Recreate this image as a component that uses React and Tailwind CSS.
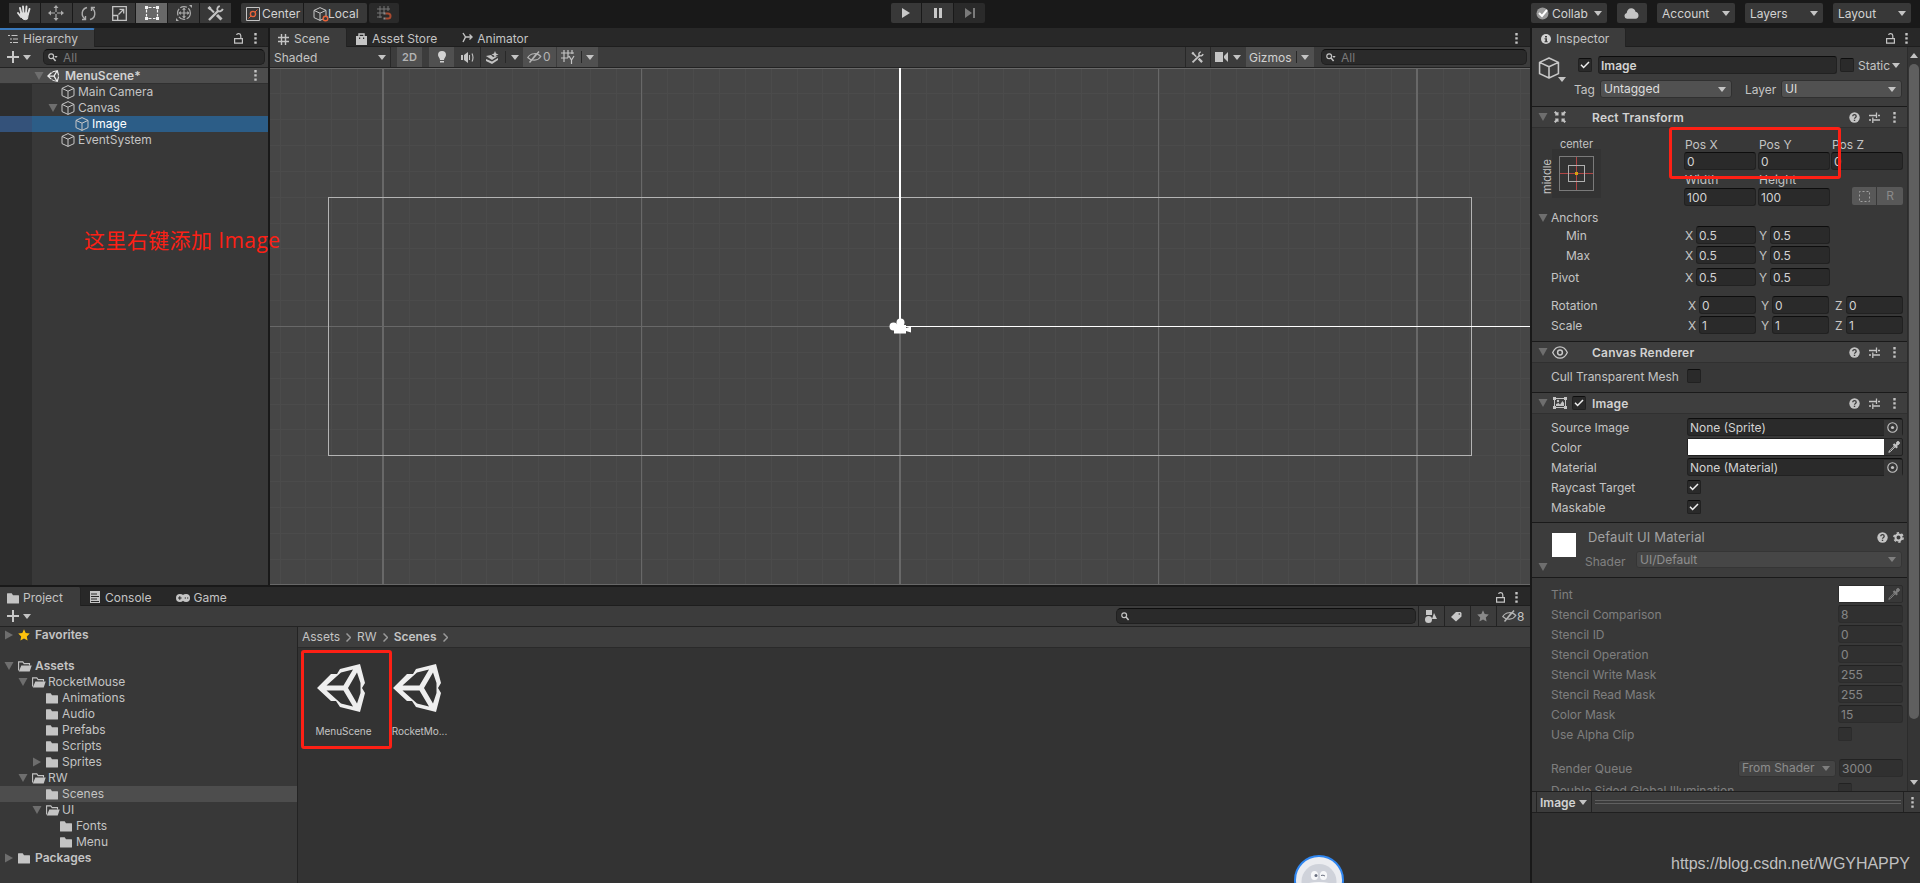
import clsx from "clsx";

/* ---------- icons ---------- */

const Down = ({ className = "text-[#c4c4c4]" }) => (
  <svg width="8" height="5" viewBox="0 0 8 5" className={clsx("shrink-0", className)} fill="currentColor">
    <path d="M0 0h8L4 5z" />
  </svg>
);

const Fold = ({ open = true }) => (
  <svg width="10" height="10" viewBox="0 0 10 10" className="shrink-0 text-[#6e6e6e]" fill="currentColor">
    {open ? <path d="M.5 1h9L5 9z" /> : <path d="M1 .5v9L9 5z" />}
  </svg>
);

const Dots = () => (
  <svg width="3" height="11" viewBox="0 0 3 11" className="shrink-0" fill="#c4c4c4">
    <path d="M.3 0h2.4v2.4H.3zM.3 4.2h2.4v2.4H.3zM.3 8.4h2.4v2.4H.3z" />
  </svg>
);

const Lock = () => (
  <svg width="9" height="11" viewBox="0 0 9 11" className="shrink-0" fill="none" stroke="#c4c4c4" strokeWidth="1.2">
    <path d="M.6 5.6h7.8v4.6H.6zM6.8 5.6V2.8C6.8.1 3 .1 2.6 2" />
  </svg>
);

const Cube = ({ size = 14 }) => (
  <svg width={size} height={size} viewBox="0 0 14 14" className="shrink-0" fill="none" stroke="#c8c8c8" strokeLinejoin="round">
    <path d="M7 .6l6 2.8v7.2l-6 2.8-6-2.8V3.4zM1 3.4l6 2.8 6-2.8M7 6.2v7.2" />
  </svg>
);

const UnityLogo = ({ size = 48, color = "#eeeeee" }) => (
  <svg width={size} height={size} viewBox="0 0 48 48" className="shrink-0">
    <path
      fill={color}
      fillRule="evenodd"
      d="M0 24L14 10h6l3-5L43 0l5 19-3 5 3 5-5 19-20-5-4-6h-5zM9.500 21.500H26.500L36 5.500 24 8.500zM9.500 26.500L24 39.500 36 42.500 26.500 26.500zM31 24L40 39.500 43.500 29V19L40 8.500z"
    />
  </svg>
);

const Folder = () => (
  <svg width="13" height="11" viewBox="0 0 13 11" className="shrink-0" fill="#c4c4c4">
    <path d="M0 .8Q0 .3.5.3h4.200l1.300 1.900h5.500q.5 0 .5.5v7.300q0 .5-.5.5H.5q-.5 0-.5-.5z" />
  </svg>
);

const FolderOpen = () => (
  <svg width="14" height="11" viewBox="0 0 14 11" className="shrink-0">
    <path d="M.6 9.500V.9h4.200l1.300 1.700h5.400v2" fill="none" stroke="#c4c4c4" strokeWidth="1.100" />
    <path d="M3.300 4.500h10.400l-2 6H.8z" fill="#c4c4c4" />
  </svg>
);

const Star = ({ color }) => (
  <svg width="12" height="12" viewBox="0 0 12 12" className="shrink-0" fill={color}>
    <path d="M6 .3l1.700 3.800 4.100.5-3 2.800.8 4.200L6 9.500l-3.600 2.100.8-4.200-3-2.800 4.100-.5z" />
  </svg>
);

const Search = ({ menu }) => (
  <svg width="10" height="9" viewBox="0 0 10 9" className="shrink-0" fill="none" stroke="#c4c4c4">
    <circle cx="3.200" cy="3.200" r="2.400" strokeWidth="1.200" />
    <path d="M5 5l2.600 3" strokeWidth="1.500" />
    {menu && <path d="M6.300 3h3.400L8 5z" fill="#c4c4c4" stroke="none" />}
  </svg>
);

const Plus = () => (
  <svg width="12" height="12" viewBox="0 0 12 12" className="shrink-0" stroke="#c8c8c8" strokeWidth="2">
    <path d="M6 0v12M0 6h12" />
  </svg>
);

const Help = () => (
  <svg width="11" height="11" viewBox="0 0 11 11" className="shrink-0">
    <circle cx="5.500" cy="5.500" r="5.200" fill="#c4c4c4" />
    <path d="M3.800 4.300c0-2.200 3.400-2 3.400 0 0 1.200-1.700 1.100-1.700 2.500" fill="none" stroke="#3c3c3c" strokeWidth="1.300" />
    <path d="M4.800 7.700h1.400V9H4.800z" fill="#3c3c3c" />
  </svg>
);

const Preset = () => (
  <svg width="11" height="11" viewBox="0 0 11 11" className="shrink-0" stroke="#c4c4c4" strokeWidth="1.300">
    <path d="M0 3.500h7M9 3.500h2M0 8h2M4.500 8H11M7.500 .5v5.500M3.800 5.500v5.500" />
  </svg>
);

const Gear = () => (
  <svg width="11" height="11" viewBox="0 0 11 11" className="shrink-0" fill="none" stroke="#c4c4c4">
    <circle cx="5.500" cy="5.500" r="3" strokeWidth="2" />
    <circle cx="5.500" cy="5.500" r="4.600" strokeWidth="1.600" strokeDasharray="2.400 2.416" />
  </svg>
);

const EyeOff = () => (
  <svg width="15" height="12" viewBox="0 0 15 12" className="shrink-0" fill="none" stroke="#b4b4b4" strokeWidth="1.200">
    <path d="M.8 6.500C3.500 1.800 10.500 1.500 13.800 5.500 11 10 4.500 10.500.8 6.500z" />
    <path d="M5 8.500L9 3.500M2.500 11.500L12 .5" strokeWidth="1.500" />
  </svg>
);

const Eye = () => (
  <svg width="16" height="13" viewBox="0 0 16 13" className="shrink-0" fill="none" stroke="#c8c8c8" strokeWidth="1.300">
    <path d="M.7 6.500C4-1 12-1 15.300 6.500 12 14 4 14 .7 6.500z" />
    <circle cx="8" cy="6.500" r="2.400" strokeWidth="1.500" />
  </svg>
);

const Tools = ({ size = 17 }) => (
  <svg width={size} height={size} viewBox="0 0 17 17" className="shrink-0" fill="none" stroke="#c4c4c4">
    <path d="M2 2.500l5 5" strokeWidth="2" />
    <path d="M1.500 2l2 2M10 10l4.500 4.500" strokeWidth="3" />
    <path d="M2 15L11 6" strokeWidth="2.400" />
    <path d="M12.800 1.200c-2.400.6-3.200 2.800-2 4.500 1.800 1.300 4.200.6 5-1.800" strokeWidth="1.800" />
  </svg>
);

const Picker = () => (
  <svg width="12" height="12" viewBox="0 0 12 12" className="shrink-0" stroke="#c4c4c4" fill="none">
    <path d="M6.800 4.500L1.500 9.800.8 11.300l1.500-.6 5.200-5.300" />
    <path d="M5.500 3l3.700 3.700M8 4.500L10.500 2" strokeWidth="2.200" />
    <circle cx="10" cy="2" r="1.400" fill="#c4c4c4" />
  </svg>
);

const Target = () => (
  <svg width="11" height="11" viewBox="0 0 11 11" className="shrink-0">
    <circle cx="5.500" cy="5.500" r="4.700" fill="none" stroke="#c4c4c4" strokeWidth="1.100" />
    <circle cx="5.500" cy="5.500" r="1.600" fill="#c4c4c4" />
  </svg>
);

const GridIcon = () => (
  <svg width="11" height="11" viewBox="0 0 11 11" className="shrink-0" stroke="#c4c4c4" strokeWidth="1.400">
    <path d="M3.500 0v11M7.500 0v11M0 3.500h11M0 7.500h11" />
  </svg>
);

/* ---------- small building blocks ---------- */

const ToolButton = ({ active, children }) => (
  <div className={clsx("flex h-5 w-[31px] items-center justify-center", active ? "bg-[#686868]" : "bg-[#383838]")}>
    {children}
  </div>
);

const MenuButton = ({ className, children }) => (
  <div className={clsx("flex h-5 items-center justify-between rounded-[2px] bg-[#383838] pt-px pl-[5px] pr-[5px]", className)}>
    {children}
  </div>
);

const Tab = ({ active, className, children }) => (
  <div
    className={clsx(
      "flex h-full items-center pt-[3px]",
      active ? "rounded-tr-[2px] border-r border-[#232323] bg-[#3c3c3c]" : "border-b border-[#1e1e1e]",
      className
    )}
  >
    {children}
  </div>
);

const SearchBox = ({ className, hint, menu = true }) => (
  <div className={clsx("flex h-4 items-center rounded-[5px] border border-[#202020] border-t-[#0e0e0e] bg-[#2a2a2a] pl-1 text-[#797979]", className)}>
    <Search menu={menu} />
    <span className="ml-[5px] pt-px">{hint}</span>
  </div>
);

const Check = ({ on, className }) => (
  <div className={clsx("flex h-3.5 w-3.5 shrink-0 items-center justify-center rounded-[2px] border border-[#212121] border-t-[#0d0d0d] bg-[#2a2a2a]", className)}>
    {on && (
      <svg width="10" height="8" viewBox="0 0 10 8" fill="none" stroke="#f0f0f0" strokeWidth="1.500">
        <path d="M1 3.800l2.600 2.700L9 1" />
      </svg>
    )}
  </div>
);

const Field = ({ className, children }) => (
  <div className={clsx("flex h-[18px] shrink-0 items-center rounded-[3px] border border-[#212121] border-t-[#0d0d0d] bg-[#2a2a2a] pl-0.5 pt-px text-[#d2d2d2]", className)}>
    {children}
  </div>
);

const Dropdown = ({ className, children }) => (
  <div className={clsx("flex shrink-0 items-center justify-between rounded-[3px] border border-[#303030] bg-[#515151] pl-[3px] pr-[5px] text-[#dedede]", className)}>
    <span>{children}</span>
    <Down />
  </div>
);

/* ---------- top toolbar ---------- */

const TopBar = () => (
  <div className="flex h-7 shrink-0 pt-[3px]">
    <div className="ml-[9px] flex w-[222px] justify-between">
      <ToolButton>
        <svg width="15" height="16" viewBox="0 0 15 16" fill="none" stroke="#e0e0e0" strokeLinecap="round">
          <path d="M4.500 9L3 3M6.500 8L6 1.500M9 8l.5-6.500M11 9l1.500-5M4 12L1 8" strokeWidth="1.900" />
          <path d="M4 8h7.500l-1 6q-2.500 1.500-4.500 0L3.500 11z" fill="#e0e0e0" />
        </svg>
      </ToolButton>
      <ToolButton>
        <svg width="16" height="16" viewBox="0 0 16 16" fill="#adadad" stroke="#adadad">
          <path d="M8 3v4M8 9v4M3 8h4M9 8h4" fill="none" strokeWidth="1.200" />
          <path d="M8 0l2.500 3h-5zM8 16l2.500-3h-5zM0 8l3-2.500v5zM16 8l-3-2.500v5z" stroke="none" />
        </svg>
      </ToolButton>
      <ToolButton>
        <svg width="15" height="15" viewBox="0 0 15 15" fill="none" stroke="#adadad" strokeWidth="1.400">
          <path d="M6 1.500C0 3 0 10 4 13M1 13.500h3.500V10M9 13.500c6-1.500 6-8.500 2-11.500M14 1.500h-3.500V5" />
        </svg>
      </ToolButton>
      <ToolButton>
        <svg width="15" height="15" viewBox="0 0 15 15" fill="none" stroke="#c4c4c4" strokeWidth="1.300">
          <path d="M.7.7h13.600v13.600H.7zM.7 9.500h5v4.800M6.500 8.500L11.500 3.500M7.500 3.300h4.200v4.200" />
        </svg>
      </ToolButton>
      <ToolButton active>
        <svg width="14" height="14" viewBox="0 0 14 14" fill="#f4f4f4">
          <path d="M0 0h3v3H0zM11 0h3v3h-3zM0 11h3v3H0zM11 11h3v3h-3z" />
          <path d="M3.500 1.500h7M3.500 12.500h7M1.500 3.500v7M12.500 3.500v7" stroke="#f4f4f4" strokeWidth="1.200" strokeDasharray="3 1.500" />
        </svg>
      </ToolButton>
      <ToolButton>
        <svg width="16" height="16" viewBox="0 0 16 16" fill="none" stroke="#adadad" strokeWidth="1.200">
          <circle cx="8" cy="8" r="6.400" strokeDasharray="7 1.500" />
          <path d="M8 3.500v9M3.500 8h9" />
          <path d="M8 2.500l2 2.200H6zM8 13.500l2-2.200H6zM2.500 8l2.200-2v4zM13.500 8l-2.200-2v4zM13 0h3v3zM0 13v3h3z" fill="#adadad" stroke="none" />
        </svg>
      </ToolButton>
      <ToolButton>
        <Tools />
      </ToolButton>
    </div>

    <div className="ml-2.5 flex h-5 w-[62px] items-center rounded-l-[2px] bg-[#383838] pt-px pl-[5px] text-[#d2d2d2]">
      <svg width="14" height="14" viewBox="0 0 14 14" className="mr-[2px] shrink-0" fill="none" stroke="#c4c4c4">
        <path d="M.5.5h13v13H.5z" />
        <circle cx="7" cy="7" r="2.600" stroke="#e8633a" strokeWidth="1.400" />
        <path d="M9 5l2.500-2.500M5 9l-2.500 2.500" stroke="#e8633a" />
      </svg>
      Center
    </div>
    <div className="ml-px flex h-5 w-[63px] items-center rounded-r-[2px] bg-[#383838] pt-px pl-[9px] text-[#d2d2d2]">
      <div className="relative mr-px">
        <Cube size={14} />
        <svg width="7" height="7" viewBox="0 0 7 7" className="absolute -right-0.5 -bottom-px">
          <circle cx="3.500" cy="3.500" r="2.300" fill="#383838" stroke="#e8633a" strokeWidth="1.400" />
        </svg>
      </div>
      Local
    </div>
    <div className="ml-0.5 flex h-5 w-[30px] items-center justify-center rounded-[2px] bg-[#2a2a2a]">
      <svg width="15" height="14" viewBox="0 0 15 14" fill="none" stroke="#777777">
        <path d="M3 0v12M7 0v7M11 0v5M0 3h13M0 7h8M0 11h5" />
        <path d="M8.500 7.500H11a2.500 2.500 0 010 5H8.500" stroke="#a84a30" strokeWidth="2" />
        <path d="M6.500 7.500h2M6.500 12.500h2" stroke="#8a8a8a" strokeWidth="2" />
      </svg>
    </div>

    <div className="ml-[492px] flex h-5 gap-px">
      <div className="flex w-[30px] items-center justify-center rounded-l-[2px] bg-[#383838]">
        <svg width="8" height="10" viewBox="0 0 8 10" fill="#c8c8c8"><path d="M0 0l8 5-8 5z" /></svg>
      </div>
      <div className="flex w-[31px] items-center justify-center bg-[#383838]">
        <svg width="8" height="10" viewBox="0 0 8 10" fill="#c8c8c8"><path d="M0 0h3v10H0zM5 0h3v10H5z" /></svg>
      </div>
      <div className="flex w-[31px] items-center justify-center rounded-r-[2px] bg-[#2a2a2a]">
        <svg width="10" height="10" viewBox="0 0 10 10" fill="#7a7a7a"><path d="M0 0l7 5-7 5zM8 0h2v10H8z" /></svg>
      </div>
    </div>

    <div className="ml-auto mr-[9px] flex h-5 gap-2.5 text-[#d2d2d2]">
      <MenuButton className="w-[76px]">
        <span className="flex items-center gap-1">
          <svg width="13" height="13" viewBox="0 0 13 13" className="mb-px">
            <circle cx="6.500" cy="6.500" r="6" fill="#9a9a9a" />
            <path d="M3 6l3 3 5-6" fill="none" stroke="#ffffff" strokeWidth="2" />
          </svg>
          <span className="-ml-px">Collab</span>
        </span>
        <Down />
      </MenuButton>
      <MenuButton className="w-[30px]">
        <svg width="15" height="11" viewBox="0 0 15 11" className="ml-[2px]" fill="#c4c4c4">
          <path d="M3 10.800a2.900 2.900 0 01-.3-5.700C3 2 5 .3 7.300.3s3.800 1.400 4.200 3.400c4 .6 4 7 0 7.100z" />
        </svg>
      </MenuButton>
      <MenuButton className="w-[78px]">Account <Down /></MenuButton>
      <MenuButton className="w-[78px]">Layers <Down /></MenuButton>
      <MenuButton className="w-[78px]">Layout <Down /></MenuButton>
    </div>
  </div>
);

/* ---------- hierarchy ---------- */

const hierarchy = [
  { name: "Main Camera", level: 0 },
  { name: "Canvas", level: 0, open: true },
  { name: "Image", level: 1, selected: true },
  { name: "EventSystem", level: 0 },
];

const Hierarchy = () => (
  <div className="flex w-[268px] shrink-0 flex-col bg-[#383838]">
    <div className="flex h-[19px] bg-[#282828]">
      <Tab active className="w-[95px] border-t-2 border-t-[#3a79bb] pt-px pl-2">
        <svg width="10" height="10" viewBox="0 0 10 10" className="mr-[5px] shrink-0" stroke="#c4c4c4">
          <path d="M0 1.500h2M3.500 1.500h6M2 5h2M5 5h5M2 8.500h2M5 8.500h5" strokeWidth="1.200" />
        </svg>
        Hierarchy
      </Tab>
      <Tab className="flex-1 justify-end gap-[11px] pt-0 pr-[11px]">
        <Lock />
        <Dots />
      </Tab>
    </div>
    <div className="flex h-[21px] items-center border-b border-[#232323] bg-[#3c3c3c] pl-[7px]">
      <Plus />
      <Down className="ml-1 text-[#c4c4c4]" />
      <SearchBox className="ml-3 w-[222px]" hint="All" />
    </div>
    <div className="flex h-4 items-center border-b border-[#303030] bg-[#4d4d4d] pl-[34px] font-semibold text-[#d2d2d2]">
      <Fold />
      <span className="ml-[3px] mr-[6px] flex"><UnityLogo size={12} /></span>
      MenuScene*
      <span className="ml-auto mr-[11px]"><Dots /></span>
    </div>
    <div className="flex flex-1 flex-col bg-linear-to-r from-[#2d2d2d] from-[32px] to-[#383838] to-[32px]">
      {hierarchy.map((item) => (
        <div key={item.name} className="flex h-4">
          <div className={clsx("w-8", item.selected && "bg-[#34527a]")} />
          <div className={clsx("flex flex-1 items-center gap-[3px]", item.selected && "bg-[#2c5d87] text-white", item.level === 1 ? "pl-[30px]" : "pl-4")}>
            <div className="flex w-2.5">{item.open && <Fold />}</div>
            <Cube />
            <span>{item.name}</span>
          </div>
        </div>
      ))}
    </div>
  </div>
);

/* ---------- scene view ---------- */

const STEP = 25.85;
const minor = Array.from({ length: 51 }, (_, i) => i - 25);

const SceneCanvas = () => (
  <svg width="1260" height="517" viewBox="0 0 1260 517" className="block bg-[#464646]" shapeRendering="crispEdges">
    <g fill="#4b4b4b">
      {minor.map((i) => (
        <rect key={i} x={Math.round(630 + i * STEP)} y="0" width="1" height="517" />
      ))}
      {minor.filter((i) => Math.abs(i) < 10).map((i) => (
        <rect key={i} x="0" y={Math.round(258 + i * STEP)} width="1260" height="1" />
      ))}
    </g>
    <g fill="#686868">
      <path d="M112 0h2v517h-2zM371 0h1v517h-1zM629 0h2v517h-2zM888 0h1v517h-1zM1146 0h2v517h-2z" />
      <path d="M0 258h1260v1H0zM0 0h1260v1H0zM0 516h1260v1H0z" />
    </g>
    <rect x="58.500" y="129.500" width="1143" height="258" fill="none" stroke="#b4b4b4" />
    <path d="M629 0h2v258h-2zM630 258h630v1H630z" fill="#ffffff" />
    <g fill="#ffffff" shapeRendering="auto">
      <circle cx="623.500" cy="258.500" r="4" />
      <circle cx="630.500" cy="254.500" r="4" />
      <path d="M624 257h12v8.500h-12zM636 260l5-1.500v6l-5-1.500z" />
    </g>
  </svg>
);

const SceneView = () => (
  <div className="ml-0.5 flex flex-1 flex-col">
    <div className="flex h-[19px] bg-[#282828]">
      <Tab active className="w-[77px] gap-[5px] pl-2"><GridIcon />Scene</Tab>
      <Tab className="gap-[5px] pl-[9px]">
        <svg width="11" height="12" viewBox="0 0 11 12" fill="#c4c4c4">
          <path d="M0 3h11v9H0z" /><path d="M3 4V1h5v3" fill="none" stroke="#c4c4c4" strokeWidth="1.400" />
          <path d="M3 4.500h1.200V6H3zM7 4.500h1.200V6H7z" fill="#282828" />
        </svg>
        Asset Store
      </Tab>
      <Tab className="gap-1 pl-[25px]">
        <svg width="11" height="11" viewBox="0 0 11 11" fill="none" stroke="#c4c4c4" strokeWidth="1.400" className="mb-0.5">
          <path d="M1 1l2.500 4L1 10M3.500 5H9M7.500 2.500L10 5 7.500 7.500" />
        </svg>
        Animator
      </Tab>
      <Tab className="flex-1 justify-end pt-0 pr-3"><Dots /></Tab>
    </div>
    <div className="flex h-[21px] items-center border-b border-[#232323] bg-[#3c3c3c]">
      <div className="flex h-full w-[121px] items-center justify-between border-r border-[#282828] pt-px pl-1 pr-1">Shaded<Down /></div>
      <div className="ml-[6px] flex h-full w-[25px] items-center justify-center bg-[#505050] text-[11px] font-semibold text-[#b4b4b4]">2D</div>
      <div className="ml-[7px] flex h-full w-[25px] items-center justify-center bg-[#505050]">
        <svg width="8" height="12" viewBox="0 0 8 12" fill="#d2d2d2">
          <path d="M4 0a4 4 0 014 4c0 2-2 3-2 5H2c0-2-2-3-2-5a4 4 0 014-4zM2 10h4v1.500H2z" />
        </svg>
      </div>
      <div className="flex h-full w-[27px] items-center justify-center border-r border-[#282828]">
        <svg width="13" height="11" viewBox="0 0 13 11" fill="#c4c4c4">
          <path d="M0 3h2v5H0zM3 3l4-3v11L3 8z" /><path d="M8.500 3v5M11 1.500q2 4 0 8" fill="none" stroke="#c4c4c4" strokeWidth="1.100" />
        </svg>
      </div>
      <div className="flex h-full w-[42px] items-center pl-[5px]">
        <svg width="13" height="13" viewBox="0 0 13 13" fill="#c4c4c4">
          <path d="M0 5l5-1 2 2 5-1-6 4zM0 8l6 2.500L12 7v2l-6 4-6-3z" /><path d="M9 0l1 2.500 2.500 1L10 4.500 9 7 8 4.500l-2.500-1L8 2.500z" />
        </svg>
        <div className="mr-[5px] ml-[6px] h-3 w-px bg-[#282828]" />
        <Down />
      </div>
      <div className="flex h-full w-[33px] items-center gap-px bg-[#505050] pl-1 text-[#b4b4b4]"><EyeOff />0</div>
      <div className="ml-px flex h-full w-[41px] items-center bg-[#505050] pl-1">
        <svg width="14" height="14" viewBox="0 0 14 14" fill="none" stroke="#c4c4c4" strokeWidth="1.200">
          <path d="M3 0v12M7 0v8M11 0v4M0 3h13M0 8h7M8 6l2.500 4L13 6M10.500 10v4" />
        </svg>
        <div className="ml-[6px] mr-1 h-3 w-px bg-[#282828]" />
        <Down />
      </div>
      <div className="ml-auto flex h-full w-[26px] items-center border-x border-[#282828] pl-[5px]"><Tools size={13} /></div>
      <div className="flex h-full w-[35px] items-center gap-[5px] pl-1">
        <svg width="13" height="10" viewBox="0 0 13 10" fill="#c4c4c4"><path d="M0 0h8v10H0zM9 4l4-4v10L9 6z" /></svg>
        <Down />
      </div>
      <div className="flex h-full w-[68px] items-center bg-[#505050] pl-[3px] text-[#d2d2d2]">
        <span className="pt-px">Gizmos</span>
        <div className="ml-auto mr-1 h-3 w-px bg-[#282828]" />
        <Down className="mr-[5px] text-[#c4c4c4]" />
      </div>
      <SearchBox className="ml-[7px] mr-[3px] w-[206px]" hint="All" />
    </div>
    <SceneCanvas />
  </div>
);

/* ---------- project ---------- */

const assetTree = [
  { name: "Assets", level: 0, open: true, bold: true },
  { name: "RocketMouse", level: 1, open: true },
  { name: "Animations", level: 2 },
  { name: "Audio", level: 2 },
  { name: "Prefabs", level: 2 },
  { name: "Scripts", level: 2 },
  { name: "Sprites", level: 2, closed: true },
  { name: "RW", level: 1, open: true },
  { name: "Scenes", level: 2, selected: true },
  { name: "UI", level: 2, open: true },
  { name: "Fonts", level: 3 },
  { name: "Menu", level: 3 },
  { name: "Packages", level: 0, closed: true, bold: true },
];

const indents = ["pl-1", "pl-[18px]", "pl-8", "pl-[46px]"];

const Crumb = () => (
  <svg width="5" height="9" viewBox="0 0 5 9" fill="none" stroke="#9a9a9a" strokeWidth="1.500"><path d="M.5.5l4 4-4 4" /></svg>
);

const SceneAsset = ({ name }) => (
  <div className="flex w-[60px] flex-col items-center">
    <UnityLogo />
    <span className="mt-[14px] ml-[5px] text-[10px] tracking-[-0.05px] whitespace-nowrap">{name}</span>
  </div>
);

const Project = () => (
  <div className="mt-0.5 flex min-h-0 flex-1 flex-col bg-[#383838]">
    <div className="flex h-[19px] bg-[#282828]">
      <Tab active className="w-[81px] gap-[3px] pl-[7px]"><Folder />Project</Tab>
      <Tab className="gap-[5px] pl-[9px]">
        <svg width="10" height="12" viewBox="0 0 10 12" className="mb-0.5"><path d="M0 0h10v12H0z" fill="#c4c4c4" /><path d="M1 3h6M1 5.500h8M1 8h6M1 10.500h8" stroke="#282828" /></svg>
        Console
      </Tab>
      <Tab className="gap-[3px] pl-[25px]">
        <svg width="14" height="8" viewBox="0 0 14 8" fill="#c4c4c4">
          <circle cx="3.900" cy="4" r="3.900" />
          <circle cx="10.100" cy="4" r="3.900" />
          <path d="M4 .8h6v5H4z" />
          <path d="M2 4h3.600M3.800 2.200v3.600M8.700 4h1.300M11 4h1.300" stroke="#282828" fill="none" />
        </svg>
        Game
      </Tab>
      <Tab className="flex-1 justify-end gap-2.5 pt-0 pr-3"><Lock /><Dots /></Tab>
    </div>
    <div className="flex h-[21px] items-center border-b border-[#232323] bg-[#3c3c3c] pl-[7px]">
      <Plus />
      <Down className="ml-1 text-[#c4c4c4]" />
      <SearchBox className="ml-auto w-[300px]" hint="" menu={false} />
      <div className="ml-0.5 flex h-full w-[26px] items-center border-l border-[#232323] pl-[6px]">
        <svg width="12" height="13" viewBox="0 0 12 13" fill="#c8c8c8"><path d="M1 0h6v5H1zM9 3l3 6H7z" /><circle cx="3.500" cy="9.500" r="3.500" /></svg>
      </div>
      <div className="flex h-full w-[26px] items-center border-l border-[#232323] pl-[6px]">
        <svg width="11" height="11" viewBox="0 0 11 11"><path d="M0 6l5-5h4.500L10.500 2v3.500L5 10.500z" fill="#c8c8c8" /><circle cx="8.300" cy="3" r=".8" fill="#3c3c3c" /></svg>
      </div>
      <div className="flex h-full w-[26px] items-center border-l border-[#232323] pl-[6px]"><Star color="#8a8a8a" /></div>
      <div className="flex h-full w-[34px] items-center border-l border-[#232323] pl-[5px]"><EyeOff /><span className="pt-px">8</span></div>
    </div>
    <div className="flex min-h-0 flex-1">
      <div className="w-[298px] shrink-0 border-r border-[#232323]">
        <div className="mb-[15px] flex h-4 items-center pl-1 font-semibold">
          <Fold open={false} />
          <span className="ml-1 mr-[5px] flex"><Star color="#fdc10d" /></span>
          Favorites
        </div>
        {assetTree.map((item) => (
          <div
            key={item.name}
            className={clsx("flex h-4 items-center", indents[item.level], item.bold && "font-semibold", item.selected && "bg-[#4d4d4d]")}
          >
            <div className="mr-1 flex w-2.5">
              {item.open && <Fold />}
              {item.closed && <Fold open={false} />}
            </div>
            <div className={clsx("flex shrink-0", item.bold ? "w-[17px]" : "w-4")}>{item.open ? <FolderOpen /> : <Folder />}</div>
            {item.name}
          </div>
        ))}
      </div>
      <div className="flex-1 bg-[#333333]">
        <div className="flex h-[21px] items-center gap-[6px] border-b border-[#2a2a2a] bg-[#3e3e3e] pl-1">
          <span>Assets</span><Crumb /><span>RW</span><Crumb /><span className="font-semibold">Scenes</span><Crumb />
        </div>
        <div className="flex gap-4 pt-[16px] pl-[13px]">
          <SceneAsset name="MenuScene" />
          <SceneAsset name="RocketMo..." />
        </div>
      </div>
    </div>
  </div>
);

/* ---------- inspector ---------- */

const ComponentHeader = ({ title, icon, check }) => (
  <div className="flex h-[22px] items-center border-t border-b border-t-[#1a1a1a] border-b-[#303030] bg-[#3e3e3e] pl-[6px] font-semibold text-[#d2d2d2]">
    <Fold />
    <div className="ml-[6px] flex w-[19px]">{icon}</div>
    <div className="w-[19px]">{check && <Check on className="-ml-px" />}</div>
    <span className="pt-0.5 tracking-[0.2px]">{title}</span>
    <span className="ml-auto"><Help /></span>
    <span className="ml-[9px]"><Preset /></span>
    <span className="ml-[13px] mr-[11px]"><Dots /></span>
  </div>
);

const Row = ({ label, className = "mt-0.5", sub, dim, children }) => (
  <div className={clsx("flex h-[18px] shrink-0 items-center pl-[19px]", className)}>
    <span className={clsx("w-[134px] shrink-0 pt-0.5 whitespace-nowrap", sub && "pl-[15px]", dim && "opacity-50")}>{label}</span>
    {children}
  </div>
);

const Vec2 = ({ value }) => (
  <>
    <span className="w-[11px] pt-px">X</span>
    <Field className="w-[60px]">{value}</Field>
    <span className="ml-[3px] w-[11px] pt-px">Y</span>
    <Field className="w-[60px]">{value}</Field>
  </>
);

const Vec3 = ({ value }) => (
  <>
    <span className="ml-[3px] w-[11px] pt-px">X</span>
    <Field className="w-[57px]">{value}</Field>
    <span className="ml-[5px] w-[11px] pt-px">Y</span>
    <Field className="w-[57px]">{value}</Field>
    <span className="ml-[6px] w-[11px] pt-px">Z</span>
    <Field className="w-[57px]">{value}</Field>
  </>
);

const ObjectField = ({ children }) => (
  <Field className="ml-0.5 w-[216px]">
    {children}
    <div className="ml-auto flex h-4 w-[18px] items-center bg-[#373737] pl-[3px]"><Target /></div>
  </Field>
);

const stencil = [
  ["Stencil Comparison", "8"],
  ["Stencil ID", "0"],
  ["Stencil Operation", "0"],
  ["Stencil Write Mask", "255"],
  ["Stencil Read Mask", "255"],
  ["Color Mask", "15"],
];

const RectTransform = () => (
  <div className="h-[213px]">
    <div className="flex h-[78px]">
      <div className="flex w-[152px] pt-2">
        <div className="flex w-5 items-center justify-center pt-2.5">
          <span className="ml-2.5 -rotate-90 text-[11px]">middle</span>
        </div>
        <div className="flex w-[49px] flex-col items-center">
          <span className="flex h-[13px] items-center pt-[3px] text-[11px]">center</span>
          <svg width="49" height="49" viewBox="0 0 49 49" className="bg-[#333333]" fill="none" shapeRendering="crispEdges">
            <path d="M24.500 7v35M7 24.500h35" stroke="#b04545" />
            <rect x="7.500" y="7.500" width="34" height="34" stroke="#7a7a7a" />
            <rect x="16.500" y="16.500" width="16" height="16" stroke="#b0b0b0" />
            <rect x="23" y="23" width="3" height="3" fill="#d8a010" />
          </svg>
        </div>
      </div>
      <div className="flex-1">
        <div className="mt-2 flex h-4 items-center pt-px pl-px">
          <span className="w-[74px]">Pos X</span><span className="w-[73px]">Pos Y</span><span>Pos Z</span>
        </div>
        <div className="flex">
          <Field className="w-[72px]">0</Field>
          <Field className="ml-0.5 w-[72px]">0</Field>
          <Field className="ml-px w-[72px]">0</Field>
        </div>
        <div className="flex h-[18px] items-center pt-0.5 pl-px">
          <span className="w-[74px]">Width</span><span>Height</span>
        </div>
        <div className="flex">
          <Field className="w-[72px]">100</Field>
          <Field className="ml-0.5 w-[72px]">100</Field>
          <div className="-mt-px ml-[22px] flex h-[18px] w-[51px] gap-px">
            <div className="flex flex-1 items-center justify-center rounded-l-[2px] bg-[#585858]">
              <svg width="11" height="11" viewBox="0 0 11 11"><path d="M.5.5h10v10H.5z" fill="none" stroke="#a0a0a0" strokeDasharray="2 2" strokeDashoffset="1" /></svg>
            </div>
            <div className="flex w-[26px] items-center justify-center rounded-r-[2px] bg-[#585858] text-[#8a8a8a]">R</div>
          </div>
        </div>
      </div>
    </div>
    <div className="mt-0.5 flex h-[18px] items-center gap-[3px] pl-[6px] pt-0.5"><Fold />Anchors</div>
    <Row label="Min" sub className="mt-0"><Vec2 value="0.5" /></Row>
    <Row label="Max" sub><Vec2 value="0.5" /></Row>
    <Row label="Pivot" className="mt-1"><Vec2 value="0.5" /></Row>
    <Row label="Rotation" className="mt-2.5"><Vec3 value="0" /></Row>
    <Row label="Scale"><Vec3 value="1" /></Row>
  </div>
);

const Inspector = () => (
  <div className="ml-0.5 flex w-[388px] shrink-0 flex-col bg-[#383838]">
    <div className="flex h-[19px] bg-[#282828]">
      <Tab active className="w-[94px] gap-[5px] pl-[9px]">
        <svg width="10" height="10" viewBox="0 0 10 10" className="mb-px"><circle cx="5" cy="5" r="5" fill="#d2d2d2" /><path d="M4 2h2v1.400H4zM3.500 4.200H6v3h.700v1H3.500v-1H4.300V5.200h-.8z" fill="#3c3c3c" /></svg>
        Inspector
      </Tab>
      <Tab className="flex-1 justify-end gap-2.5 pt-0 pr-3"><Lock /><Dots /></Tab>
    </div>

    <div className="flex h-[744px] shrink-0">
      <div className="w-[375px] overflow-hidden">
        {/* GameObject header */}
        <div className="flex h-[59px] bg-[#3c3c3c] pt-[9px]">
          <div className="flex w-[43px] pt-px pl-[6px]">
            <Cube size={22} />
            <Down className="mt-[20px] -ml-[2px] text-[#c4c4c4]" />
          </div>
          <div className="flex-1">
            <div className="flex h-[18px] items-center pl-[3px]">
              <Check on />
              <Field className="ml-[6px] w-[239px] font-semibold">Image</Field>
              <Check className="mx-[3px]" />
              <span className="ml-px mr-0.5 pt-0.5">Static</span>
              <Down />
            </div>
            <div className="mt-[6px] flex h-[18px] items-center">
              <span className="-ml-px w-[26px] pt-0.5">Tag</span>
              <Dropdown className="h-[18px] w-[132px]">Untagged</Dropdown>
              <span className="ml-[13px] w-[36px] pt-0.5">Layer</span>
              <Dropdown className="h-[18px] w-[121px]">UI</Dropdown>
            </div>
          </div>
        </div>

        <ComponentHeader
          title="Rect Transform"
          icon={
            <svg width="12" height="12" viewBox="0 0 12 12" fill="#c4c4c4">
              <path d="M0 1.500L1.500 0 3 1.500 4.500 1v3.500H1L1.500 3zM12 1.500L10.500 0 9 1.500 7.500 1v3.500H11L10.500 3zM0 10.500L1.500 12 3 10.500l1.500.5V7.500H1L1.500 9zM12 10.500L10.500 12 9 10.500l-1.500.5V7.500H11L10.500 9z" />
            </svg>
          }
        />
        <RectTransform />

        <ComponentHeader title="Canvas Renderer" icon={<span className="-ml-0.5"><Eye /></span>} />
        <div className="h-[29px] pt-1">
          <Row label="Cull Transparent Mesh" className="mt-0"><Check className="ml-0.5" /></Row>
        </div>

        <ComponentHeader
          title="Image"
          check
          icon={
            <svg width="14" height="12" viewBox="0 0 14 12" className="-ml-px" fill="#c4c4c4">
              <path d="M1.500 1.500h11v9h-11z" fill="none" stroke="#c4c4c4" />
              <path d="M0 0h3v3H0zM11 0h3v3h-3zM0 9h3v3H0zM11 9h3v3h-3zM3 9V7l2.500-1 1.500 1.500L9.500 4 11 6v3z" />
              <circle cx="5" cy="4" r="1.200" />
            </svg>
          }
        />
        <div className="h-[108px] pt-1">
          <Row label="Source Image" className="mt-0"><ObjectField>None (Sprite)</ObjectField></Row>
          <Row label="Color">
            <div className="ml-0.5 flex h-[18px] w-[216px] items-center rounded-[2px] border border-[#212121]">
              <div className="h-4 w-[196px] bg-white" />
              <span className="ml-1"><Picker /></span>
            </div>
          </Row>
          <Row label="Material"><ObjectField>None (Material)</ObjectField></Row>
          <Row label="Raycast Target"><Check on className="ml-0.5" /></Row>
          <Row label="Maskable"><Check on className="ml-0.5" /></Row>
        </div>

        {/* Material */}
        <div className="flex h-14 border-y border-[#1a1a1a] bg-[#3c3c3c]">
          <div className="flex w-5 flex-col justify-end pb-[5px] pl-[6px]"><Fold /></div>
          <div className="mt-2.5 h-6 w-6 bg-white" />
          <div className="flex-1 pl-[9px]">
            <div className="mt-[6px] flex h-4 items-center pl-[3px] text-[13px] tracking-[0.15px] text-[#a2a2a2]">
              Default UI Material
              <span className="ml-auto"><Help /></span>
              <span className="mr-[3px] ml-[5px]"><Gear /></span>
            </div>
            <div className="mt-[6px] flex h-[17px] items-center opacity-50">
              <span className="w-[51px] pt-1">Shader</span>
              <Dropdown className="h-[17px] w-[266px]">UI/Default</Dropdown>
            </div>
          </div>
        </div>

        <Row label="Tint" dim className="mt-[7px]">
          <div className="ml-[153px] flex h-[18px] w-[65px] items-center rounded-[2px] border border-[#2c2c2c]">
            <div className="h-4 w-[45px] bg-white" />
            <span className="ml-1 opacity-50"><Picker /></span>
          </div>
        </Row>
        {stencil.map(([label, value]) => (
          <Row key={label} label={label} dim><Field className="ml-[153px] w-[65px] opacity-50">{value}</Field></Row>
        ))}
        <Row label="Use Alpha Clip" dim><Check className="ml-[153px] opacity-50" /></Row>
        <Row label="Render Queue" dim className="mt-4">
          <Dropdown className="ml-[53px] h-[17px] w-[98px] opacity-50">From Shader</Dropdown>
          <Field className="ml-[3px] w-16 opacity-50">3000</Field>
        </Row>
        <Row label="Double Sided Global Illumination" dim className="mt-1"><Check className="ml-[153px] opacity-50" /></Row>
      </div>

      {/* Scrollbar */}
      <div className="flex w-[13px] flex-col items-center border-l border-[#2c2c2c] bg-[#353535] pt-[6px]">
        <Down className="rotate-180 text-[#c4c4c4]" />
        <div className="mt-[6px] h-[655px] w-2.5 rounded-full bg-[#5f5f5f]" />
        <Down className="mt-auto mb-[6px] text-[#c4c4c4]" />
      </div>
    </div>

    {/* Preview pane */}
    <div className="flex h-[22px] shrink-0 items-center border-y border-[#1f1f1f] bg-[#3c3c3c]">
      <div className="ml-1 flex h-full w-[56px] items-center gap-[3px] border-x border-[#232323] pt-px pl-[3px] font-semibold text-[#d2d2d2]">Image <Down /></div>
      <div className="ml-[3px] h-1 w-[306px] border-y border-[#606060]" />
      <div className="ml-[2px] flex h-full flex-1 items-center border-l border-[#232323] pl-[7px]"><Dots /></div>
    </div>
    <div className="flex flex-1 items-center justify-end bg-[#313131] pt-[32px] pr-2.5 font-['Liberation_Sans',sans-serif] text-[16px] tracking-[-0.04px] text-[#c0c0c0]">
      https://blog.csdn.net/WGYHAPPY
    </div>
  </div>
);

/* ---------- overlays ---------- */

const Mascot = () => (
  <svg width="50" height="28" viewBox="0 0 50 28" className="absolute top-[855px] left-[1294px]">
    <circle cx="25" cy="25" r="24" fill="#ebecf0" stroke="#2f86f0" strokeWidth="2" />
    <circle cx="25" cy="26.500" r="17.500" fill="#cfd2da" />
    <g fill="#f6f7f9">
      <ellipse cx="20.500" cy="20.500" rx="3.600" ry="4.500" />
      <ellipse cx="29.500" cy="20.500" rx="3.600" ry="4.500" />
      <path d="M15 28q10-2 20 0z" />
    </g>
    <circle cx="22" cy="20.500" r="1.500" fill="#6a7080" />
    <path d="M27 20.500q2-1 4 .5" stroke="#6a7080" fill="none" />
  </svg>
);

export default function App() {
  return (
    <div className="relative flex h-[883px] w-[1920px] flex-col overflow-hidden bg-[#191919] font-[Inter,sans-serif] text-[12px] leading-none text-[#c4c4c4]">
      <TopBar />
      <div className="flex min-h-0 flex-1">
        <div className="flex w-[1530px] shrink-0 flex-col">
          <div className="flex h-[557px] shrink-0">
            <Hierarchy />
            <SceneView />
          </div>
          <Project />
        </div>
        <Inspector />
      </div>

      {/* Annotations */}
      <div className="absolute top-[228px] left-[84px] font-['Open_Sans','Noto_Sans_CJK_SC',sans-serif] text-[21px] leading-[24px] tracking-[0.4px] whitespace-nowrap text-[#fd2015]">
        这里右键添加 Image
      </div>
      <div className="absolute top-[127px] left-[1669px] h-[52px] w-[172px] rounded-[3px] border-3 border-[#fd2015]" />
      <div className="absolute top-[650px] left-[301px] h-[99px] w-[91px] rounded-[3px] border-3 border-[#fd2015]" />
      <Mascot />
    </div>
  );
}
